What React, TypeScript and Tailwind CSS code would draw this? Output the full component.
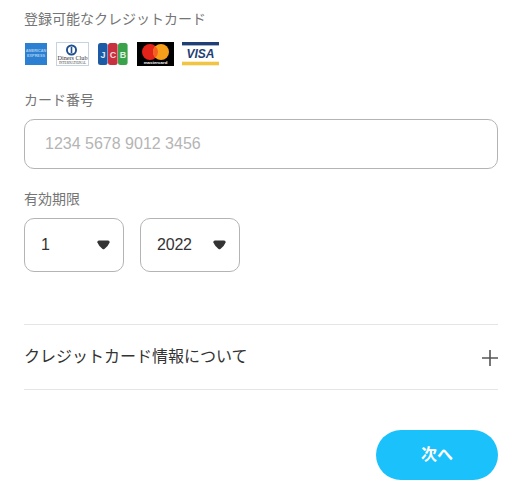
const FONT = "font-['Liberation_Sans','Noto_Sans_CJK_JP',sans-serif]";

function Amex() {
  return (
    <svg width="22" height="22" viewBox="0 0 22 22" className="mt-[1px] ml-[1px]">
      <rect width="22" height="22" fill="#2b80d2" />
      <text x="11" y="9" fontSize="3.8" fill="#a9cdee" textAnchor="middle" fontFamily="Liberation Sans" fontWeight="700">AMERICAN</text>
      <text x="11" y="13.5" fontSize="3.8" fill="#a9cdee" textAnchor="middle" fontFamily="Liberation Sans" fontWeight="700">EXPRESS</text>
    </svg>
  );
}

function Diners() {
  return (
    <svg width="33" height="24" viewBox="0 0 33 24">
      <rect x="0.5" y="0.5" width="32" height="23" fill="#fff" stroke="#c5d3e2" />
      <circle cx="15.5" cy="8" r="5.5" fill="#1f4f8f" />
      <circle cx="15.5" cy="8" r="3.6" fill="#fff" />
      <rect x="14.7" y="5" width="1.6" height="6" fill="#1f4f8f" />
      <text x="16.5" y="18" fontSize="6.2" fill="#333" textAnchor="middle" fontFamily="Liberation Serif">Diners Club</text>
      <text x="16.5" y="22" fontSize="3.4" fill="#444" textAnchor="middle" fontFamily="Liberation Serif">INTERNATIONAL</text>
    </svg>
  );
}

function Jcb() {
  return (
    <svg width="30" height="24" viewBox="0 0 30 24">
      <rect x="0" y="1" width="9.6" height="22" rx="2.5" fill="#1d5aa6" />
      <rect x="10" y="1" width="9.6" height="22" rx="2.5" fill="#c8303f" />
      <rect x="20" y="1" width="9.6" height="22" rx="2.5" fill="#3aa24a" />
      <text x="5" y="16" fontSize="9" fill="#dfe9f5" textAnchor="middle" fontFamily="Liberation Sans" fontWeight="700">J</text>
      <text x="15" y="16" fontSize="9" fill="#f3d8db" textAnchor="middle" fontFamily="Liberation Sans" fontWeight="700">C</text>
      <text x="25" y="16" fontSize="9" fill="#dff0e2" textAnchor="middle" fontFamily="Liberation Sans" fontWeight="700">B</text>
    </svg>
  );
}

function Master() {
  return (
    <svg width="37" height="24" viewBox="0 0 37 24">
      <rect width="37" height="24" fill="#000" />
      <circle cx="13" cy="10" r="8" fill="#e2231a" />
      <circle cx="24" cy="10" r="8" fill="#f79e1b" />
      <path d="M18.5 4.2a8 8 0 0 1 0 11.6a8 8 0 0 1 0-11.6z" fill="#f26122" />
      <text x="18.5" y="22.3" fontSize="4.4" fill="#fff" textAnchor="middle" fontFamily="Liberation Sans" fontWeight="700">mastercard</text>
    </svg>
  );
}

function Visa() {
  return (
    <svg width="37" height="24" viewBox="0 0 37 24">
      <rect width="37" height="24" fill="#fff" />
      <rect width="37" height="3.4" fill="#1f3f75" />
      <rect y="19.7" width="37" height="3.6" fill="#f0c544" />
      <text x="18.5" y="16" fontSize="12" fill="#1f3f75" textAnchor="middle" fontFamily="Liberation Sans" fontWeight="700" fontStyle="italic">VISA</text>
    </svg>
  );
}

function Select({ value }: { value: string }) {
  return (
    <div className="w-[100px] h-[54px] flex items-center justify-between pl-4 pr-[13px] border border-[#b4b4b4] rounded-[10px] bg-white">
      <span className="text-[16px] text-[#333] tracking-[-0.2px]">{value}</span>
      <svg width="13" height="10" viewBox="0 0 13 10">
        <path d="M2 .6 H11 Q13 .6 12.6 2.4 Q11 6.4 7.4 9 Q6.5 9.6 5.6 9 Q2 6.4 .4 2.4 Q0 .6 2 .6z" fill="#333" />
      </svg>
    </div>
  );
}

export default function App() {
  return (
    <div className={`${FONT} w-[522px] h-[501px] bg-white px-6 pt-[9px] overflow-hidden`}>
      <div className="text-[14px] leading-5 text-[#757575]">登録可能なクレジットカード</div>
      <div className="flex items-start gap-[9px] mt-[13px] h-[24px]">
        <Amex />
        <Diners />
        <Jcb />
        <Master />
        <div className="-ml-[1px]"><Visa /></div>
      </div>
      <div className="text-[14px] leading-5 text-[#757575] mt-[24px]">カード番号</div>
      <div className="mt-[9px] h-[50px] border border-[#b4b4b4] rounded-[10px] flex items-center pl-5 text-[16px] text-[#b5b5b5]">
        1234 5678 9012 3456
      </div>
      <div className="text-[14px] leading-5 text-[#757575] mt-[20px]">有効期限</div>
      <div className="flex gap-4 mt-[9px]">
        <Select value="1" />
        <Select value="2022" />
      </div>
      <div className="mt-[52px] h-[66px] border-y border-[#e5e5e5] flex items-center justify-between">
        <span className="text-[16px] text-[#333]">クレジットカード情報について</span>
        <svg width="16" height="16" viewBox="0 0 16 16" className="mt-[1px]">
          <path d="M8 0V16M0 8H16" stroke="#555" strokeWidth="1.6" />
        </svg>
      </div>
      <div className="flex justify-end mt-[40px]">
        <button className="w-[122px] h-[50px] rounded-full bg-[#1bc1fb] text-white font-bold text-[16px] flex items-center justify-center">
          次へ
        </button>
      </div>
    </div>
  );
}
